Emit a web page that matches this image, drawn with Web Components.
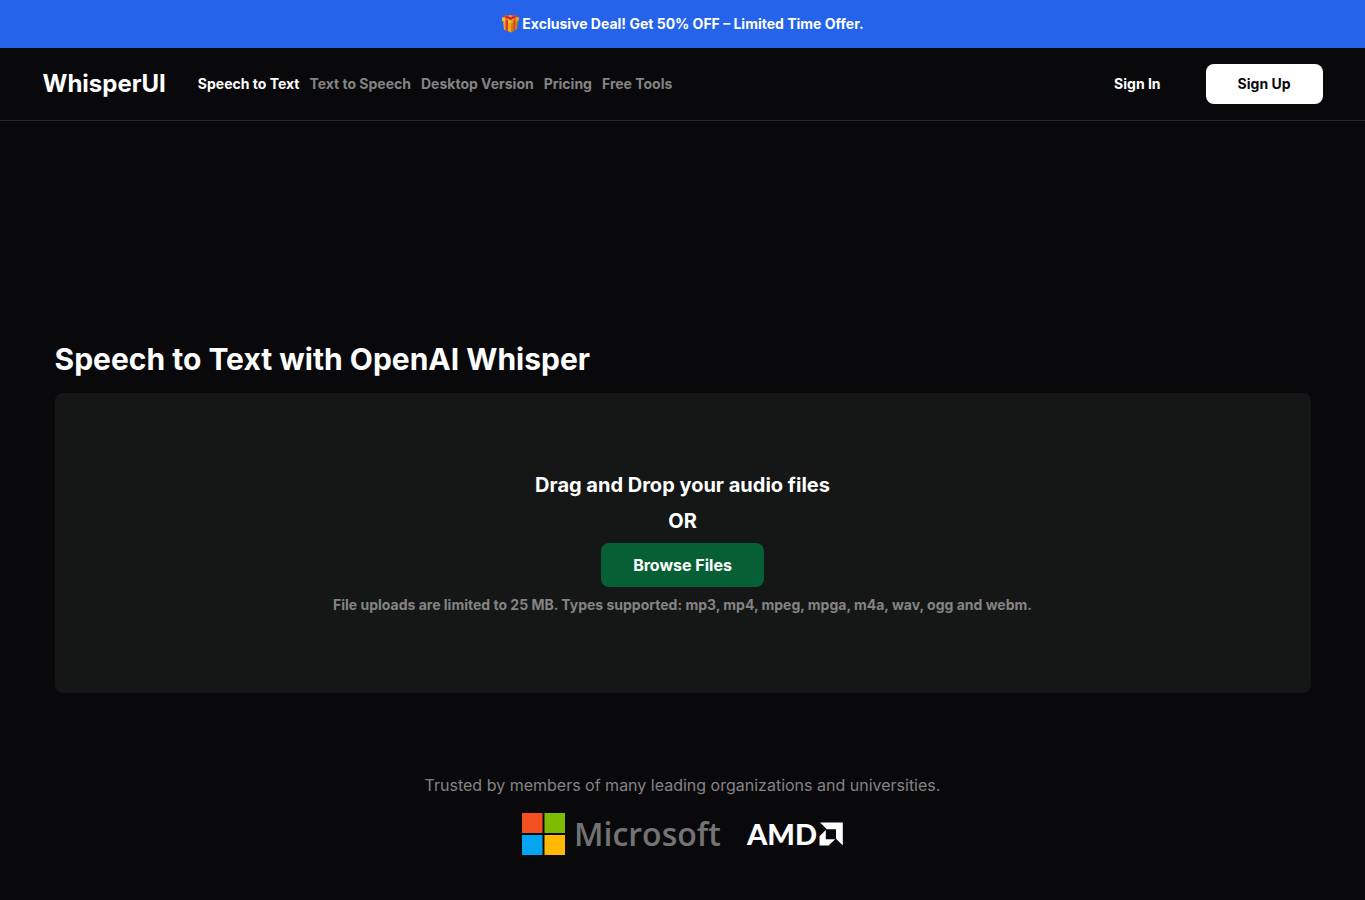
<!DOCTYPE html>
<html lang="en">
<head>
<meta charset="utf-8">
<meta name="viewport" content="width=device-width, initial-scale=1">
<title>WhisperUI - Speech to Text</title>
<style>
  html { background: #09090b; }
  body { margin: 0; color: #fff; font-family: Inter, "Liberation Sans", sans-serif; font-size: 14px; line-height: 20px; }
</style>
</head>
<body>
<promo-banner>Exclusive Deal! Get 50% OFF – Limited Time Offer.</promo-banner>
<site-header>
  <nav-link href="#speech" current>Speech to Text</nav-link>
  <nav-link href="#tts">Text to Speech</nav-link>
  <nav-link href="#desktop">Desktop Version</nav-link>
  <nav-link href="#pricing">Pricing</nav-link>
  <nav-link href="#tools">Free Tools</nav-link>
  <ui-button slot="actions" variant="ghost">Sign In</ui-button>
  <ui-button slot="actions" variant="light">Sign Up</ui-button>
</site-header>
<main-page>
  <upload-area></upload-area>
  <trusted-by slot="trusted">Trusted by members of many leading organizations and universities.</trusted-by>
</main-page>
<script>
function define(name, html) {
  customElements.define(name, class extends HTMLElement {
    constructor() {
      super();
      const t = document.createElement('template');
      t.innerHTML = html;
      this.attachShadow({ mode: 'open' }).append(t.content.cloneNode(true));
      const a = this.shadowRoot.querySelector('a');
      if (a && this.hasAttribute('href')) {
        a.href = this.getAttribute('href');
        if (this.hasAttribute('current')) a.setAttribute('aria-current', 'page');
      }
    }
  });
}

define('promo-banner', `
<style>
  :host { display: flex; align-items: center; justify-content: center; gap: 2px; padding: 14px 16px; background: #2563eb; font-weight: 700; }
  svg { width: 19px; height: 20px; flex: none; }
</style>
<svg viewBox="0 0 19 20" aria-hidden="true">
  <path d="M2 6l8 3v9.500l-7-3z" fill="#f0a818"/><path d="M10 9l7-3-1 9-6 3.500z" fill="#c98410"/>
  <path d="M1 3.500l8-2.500 9 2.500v3L10 9.500 1 6.500z" fill="#e9a11a"/>
  <path d="M1 3.500l9 3v3l-9-3z" fill="#f7bd2e"/>
  <path d="M4.500 5l2.500 1v11.300l-2.500-1zM12.500 6l2-1-.5 11.200-1.500.9z" fill="#d83a35"/>
  <path d="M9 4C7 0 4 0 3.500 2S6 5 9 5zM10 4c2-4 5-4 5.500-2S13 5 10 5z" fill="#e5403a"/>
  <path d="M5 2.500l4 2M14 2.500l-4 2" stroke="#a81f26" fill="none"/>
  <circle cx="9.500" cy="4.500" r="1.500" fill="#c72b2d"/>
</svg>
<span><slot></slot></span>`);

define('site-header', `
<style>
  :host { display: block; border-bottom: 1px solid #27272a; }
  .bar { display: flex; align-items: center; gap: 32px; box-sizing: border-box; max-width: 1280px; margin: 0 auto; padding: 16px 0; }
  .brand { font-size: 24px; line-height: 32px; font-weight: 700; color: #fff; text-decoration: none; }
  nav { display: flex; gap: 10px; }
  .actions { display: flex; gap: 13px; margin-left: auto; }
</style>
<header class="bar">
  <a class="brand" id="brand">WhisperUI</a>
  <nav aria-label="Main"><slot></slot></nav>
  <div class="actions"><slot name="actions"></slot></div>
</header>`);

define('nav-link', `
<style>
  :host { display: block; font-weight: 700; color: #848484; }
  :host([current]) { color: #fff; }
  a { color: inherit; text-decoration: none; white-space: nowrap; }
</style>
<a><slot></slot></a>`);

define('ui-button', `
<style>
  :host { display: block; }
  button { display: block; margin: 0; border: 0; border-radius: 8px; padding: 10px 32px; background: transparent; color: #fff; font: inherit; font-weight: 700; white-space: nowrap; cursor: pointer; }
  :host([variant=light]) button { background: #fff; color: #09090b; }
  :host([variant=primary]) button { background: #065f35; padding: 10px 32px; font-size: 16px; line-height: 24px; }
</style>
<button type="button"><slot></slot></button>`);

define('main-page', `
<style>
  :host { display: block; }
  main { box-sizing: border-box; max-width: 1280px; margin: 0 auto; padding: 220px 12px 40px; }
  h1 { margin: 0 0 16px; font-size: 30px; line-height: 36px; font-weight: 700; }
</style>
<main>
  <h1>Speech to Text with OpenAI Whisper</h1>
  <slot></slot>
  <slot name="trusted"></slot>
</main>`);

define('upload-area', `
<style>
  :host { display: flex; flex-direction: column; align-items: center; justify-content: center; gap: 8px; box-sizing: border-box; min-height: 300px; padding: 32px; border-radius: 8px; background: #151716; text-align: center; }
  p { margin: 0; font-size: 20px; line-height: 28px; font-weight: 700; }
  .note { font-size: 14px; line-height: 20px; color: #848484; }
</style>
<p>Drag and Drop your audio files</p>
<p>OR</p>
<ui-button variant="primary">Browse Files</ui-button>
<p class="note">File uploads are limited to 25 MB. Types supported: mp3, mp4, mpeg, mpga, m4a, wav, ogg and webm.</p>`);

define('trusted-by', `
<style>
  :host { display: flex; flex-direction: column; align-items: center; gap: 16px; margin-top: 80px; }
  p { margin: 0; font-size: 16px; line-height: 24px; color: #848484; }
  .logos { display: flex; align-items: center; gap: 26px; }
</style>
<p><slot></slot></p>
<div class="logos"><microsoft-logo></microsoft-logo><amd-logo></amd-logo></div>`);

define('microsoft-logo', `
<style>
  :host { display: flex; align-items: center; gap: 9px; height: 42px; font: 600 32px/42px "Open Sans", "Noto Sans", sans-serif; color: #737373; }
  svg { width: 43px; height: 42px; flex: none; }
</style>
<svg viewBox="0 0 43 42" aria-hidden="true"><path fill="#f35022" d="M0 0h20.500v20H0z"/><path fill="#80bb03" d="M22.500 0H43v20H22.500z"/><path fill="#03a5f0" d="M0 22h20.500v20H0z"/><path fill="#ffb903" d="M22.500 22H43v20H22.500z"/></svg>
<span>Microsoft</span>`);

define('amd-logo', `
<style>
  :host { display: flex; align-items: center; gap: 2px; font: 900 29px/32px Lato, Inter, sans-serif; color: #fff; }
  svg { width: 24px; height: 24px; flex: none; }
</style>
<span>AMD</span>
<svg viewBox="0 0 24 24" aria-hidden="true"><path fill="#fff" d="M1 0.500H23.800V23.500L17 16.800V7.200H7.800zM6.800 8V17.200H16.200L9.600 23.500H0.500V14.200z"/></svg>`);

document.querySelector('site-header').shadowRoot.getElementById('brand').href = '#home';
</script>
</body>
</html>
